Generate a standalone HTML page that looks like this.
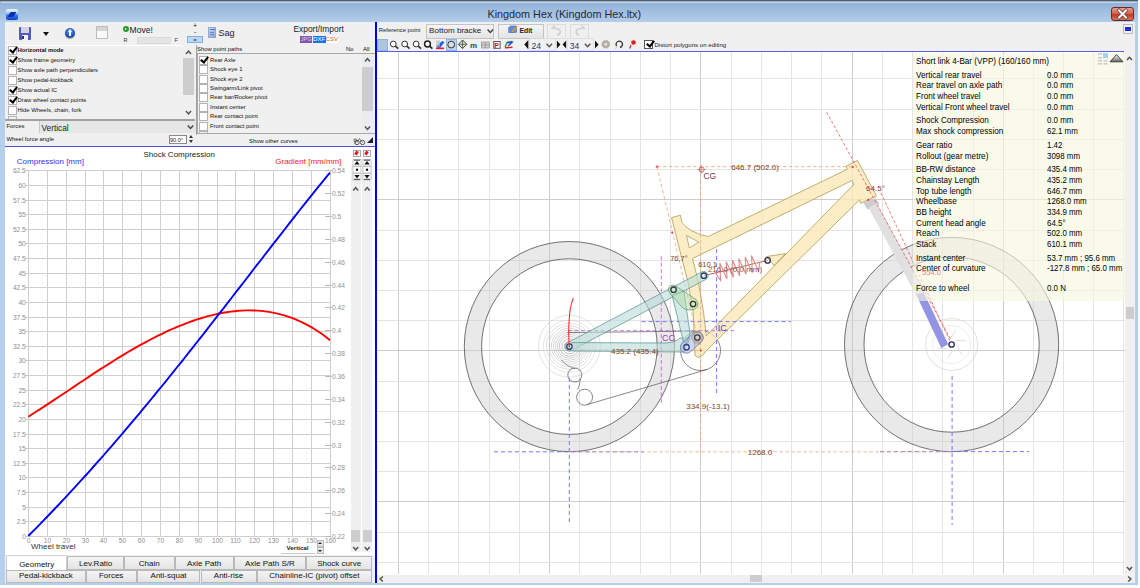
<!DOCTYPE html>
<html><head><meta charset="utf-8">
<style>
html,body{margin:0;padding:0;width:1140px;height:588px;overflow:hidden;background:#fbfcfd;font-family:"Liberation Sans",sans-serif;}
.a{position:absolute;}
#win{position:absolute;left:0;top:0;width:1138px;height:584.5px;background:#b6cfea;}
#title{position:absolute;left:0;top:0;width:1138px;height:22px;background:linear-gradient(#8fb0d4,#b3cdea);border-top:1px solid #5a5a5a;box-sizing:border-box;}
#client{position:absolute;left:5px;top:22px;width:1130px;height:561px;background:#f0f0f0;}
.cl{font-size:6.6px;fill:#909090;font-family:"Liberation Sans",sans-serif;}
.t6{font-size:5.9px;color:#111;white-space:pre;}
.cb{position:absolute;width:7px;height:7px;border:1px solid #b2b2b2;background:#fff;}
.ck::after{content:"";position:absolute;left:2px;top:-2.2px;width:2.8px;height:6.2px;border:solid #000;border-width:0 2.1px 2.1px 0;transform:rotate(38deg);}
.tab{position:absolute;box-sizing:border-box;border:1px solid #b9b9b9;background:linear-gradient(#f4f4f4,#e4e4e4);font-size:8px;color:#111;text-align:center;line-height:13px;}
.info{position:absolute;left:915.5px;font-size:8.8px;color:#000;white-space:pre;transform:scaleX(0.925);transform-origin:0 0;}
.val{position:absolute;left:1047px;font-size:8.8px;color:#000;white-space:pre;transform:scaleX(0.9);transform-origin:0 0;}
svg text{font-family:"Liberation Sans",sans-serif;}
</style></head><body>
<div id="win">
 <div id="title">
  <div class="a" style="left:6px;top:8px;width:12px;height:11px;border-radius:2px;background:linear-gradient(#f4faff 0%,#a8d0f8 35%,#2a7ae8 60%,#1040c0);"></div><div class="a" style="left:9px;top:11px;width:6px;height:5px;background:#0a30b0;transform:skewX(-30deg);border-radius:1px;"></div>
  <div class="a" style="left:1px;top:1px;width:1136px;height:1px;background:#c4d6ec;"></div>
  <div class="a" style="left:487.5px;top:6.5px;font-size:10.8px;color:#1e2a3a;white-space:pre;">Kingdom Hex (Kingdom Hex.ltx)</div>
  <div class="a" style="left:1111px;top:6px;width:23px;height:14px;box-sizing:border-box;border:1px solid #6b2a2a;border-radius:3px;background:linear-gradient(#e9a08c,#d9614a 45%,#c23c22 55%,#d8745c);"></div>
  <svg class="a" style="left:1111px;top:6px;" width="23" height="14"><path d="M8,3.5 L15,10.5 M15,3.5 L8,10.5" stroke="#5a3a3a" stroke-width="3.4" stroke-linecap="square"/><path d="M8,3.5 L15,10.5 M15,3.5 L8,10.5" stroke="#fff" stroke-width="2" stroke-linecap="square"/></svg>
 </div>
 <div id="client"></div>
</div>

<!-- LEFT PANE -->
<div class="a" style="left:5px;top:22px;width:370px;height:561px;background:#f0f0f0;"></div>
<!-- toolbar icons -->
<div class="a" style="left:18.5px;top:27px;width:12.5px;height:13px;background:#5656c4;border-radius:1px;"></div>
<div class="a" style="left:21px;top:27px;width:7.5px;height:5.5px;background:#d4d4dc;"></div>
<div class="a" style="left:21.5px;top:35px;width:6px;height:5px;background:#f4f4ff;"></div><div class="a" style="left:22px;top:36px;width:1.5px;height:2.5px;background:#2a2aa0;"></div>
<div class="a" style="left:43px;top:32px;width:0;height:0;border-left:3px solid transparent;border-right:3px solid transparent;border-top:4px solid #111;"></div>
<div class="a" style="left:65px;top:28px;width:10px;height:10px;border-radius:50%;background:radial-gradient(circle at 50% 35%,#6aa0ff,#1040b0 70%);box-shadow:0 1px 1px #999;"></div>
<div class="a" style="left:69.2px;top:32px;width:1.8px;height:4px;background:#fff;"></div><div class="a" style="left:67.6px;top:29.3px;width:0;height:0;border-left:2.5px solid transparent;border-right:2.5px solid transparent;border-bottom:3px solid #fff;"></div>
<div class="a" style="left:96px;top:26px;width:12px;height:13px;box-sizing:border-box;border:1px solid #bcbcbc;background:linear-gradient(#d4d4d4 40%,#fafafa 40%);"></div>
<div class="a" style="left:123px;top:26px;width:6px;height:6px;border-radius:50%;background:#2a9a2a;"></div><div class="a" style="left:125.2px;top:27.6px;width:0;height:0;border-top:1.4px solid transparent;border-bottom:1.4px solid transparent;border-left:2.2px solid #fff;"></div>
<div class="a" style="left:129.5px;top:24.5px;font-size:8.6px;color:#222;">Move!</div>
<div class="a" style="left:123.5px;top:37.3px;font-size:5.5px;color:#333;">R</div>
<div class="a" style="left:136.5px;top:37px;width:34px;height:6.5px;background:#e4e4e4;border:1px solid #dadada;box-sizing:border-box;"></div>
<div class="a" style="left:174.5px;top:37.3px;font-size:5.5px;color:#333;">F</div>
<div class="a" style="left:193px;top:22.3px;font-size:7px;color:#222;">+</div>
<div class="a" style="left:194px;top:28px;font-size:7px;color:#222;">-</div>
<div class="a" style="left:187px;top:36px;width:16px;height:7px;box-sizing:border-box;background:#bcd8f4;border:1px solid #7db0e8;font-size:6px;line-height:6px;text-align:center;color:#222;">=</div>
<div class="a" style="left:208px;top:27px;width:7.5px;height:10.5px;background:linear-gradient(135deg,#c8d8f8,#8aa4e0);border:0.5px solid #9aa8c8;box-sizing:border-box;"></div><div class="a" style="left:210px;top:29px;width:4.5px;height:1.2px;background:#3a7ae8;"></div><div class="a" style="left:210px;top:31.5px;width:3.5px;height:0.8px;background:#6a8ad0;"></div><div class="a" style="left:210px;top:33.5px;width:4px;height:0.8px;background:#6a8ad0;"></div>
<div class="a" style="left:218.5px;top:28px;font-size:9px;color:#222;">Sag</div>
<div class="a" style="left:293.5px;top:24px;font-size:8.4px;color:#222;white-space:pre;">Export/Import</div>
<div class="a" style="left:299.7px;top:35.8px;width:12.8px;height:6.8px;background:#8454b0;font-size:5.5px;color:#ddd;line-height:7px;text-align:center;">JPG</div>
<div class="a" style="left:312.5px;top:35.8px;width:13.1px;height:6.8px;background:#1a74e8;font-size:6px;color:#fff;line-height:7px;text-align:center;">DXF</div>
<div class="a" style="left:325.6px;top:35.8px;width:12px;height:6.8px;background:#fff;font-size:6px;color:#e05030;line-height:7px;text-align:center;">CSV</div>

<!-- checkbox list left -->
<div class="a" style="left:6px;top:45px;width:177px;height:75px;background:#f0f0f0;border-top:1px solid #fff;"></div>
<div class="a" style="left:183px;top:45px;width:12px;height:75px;background:#f0f0f0;"></div>
<div class="a" style="left:183px;top:58px;width:11px;height:37px;background:#cdcdcd;"></div>
<div class="a" style="left:5px;top:119px;width:190px;height:1.5px;background:#a0a0a0;"></div>
<div class="a" style="left:195.5px;top:45px;width:1px;height:90px;background:#a0a0a0;"></div>

<div class="cb ck" style="left:8px;top:46px;"></div><div class="a t6" style="left:17.5px;top:46.5px;font-weight:bold;">Horizontal mode</div>
<div class="cb ck" style="left:8px;top:56px;"></div><div class="a t6" style="left:17.5px;top:56.5px;">Show frame geometry</div>
<div class="cb" style="left:8px;top:66px;"></div><div class="a t6" style="left:17.5px;top:66.5px;">Show axle path perpendiculars</div>
<div class="cb" style="left:8px;top:76px;"></div><div class="a t6" style="left:17.5px;top:76.5px;">Show pedal-kickback</div>
<div class="cb ck" style="left:8px;top:86px;"></div><div class="a t6" style="left:17.5px;top:86.5px;">Show actual IC</div>
<div class="cb ck" style="left:8px;top:96px;"></div><div class="a t6" style="left:17.5px;top:96.5px;">Draw wheel contact points</div>
<div class="cb" style="left:8px;top:106px;"></div><div class="a t6" style="left:17.5px;top:106.5px;">Hide Wheels, chain, fork</div>
<div class="a" style="left:8px;top:116px;width:9px;height:3px;border:1px solid #b8b8b8;border-bottom:0;box-sizing:border-box;"></div>

<!-- forces row -->
<div class="a t6" style="left:6.5px;top:122.5px;">Forces</div>
<div class="a" style="left:39px;top:120.5px;width:156px;height:12px;background:#e6e6e6;border-left:1px solid #c8c8c8;"></div>
<div class="a" style="left:41.5px;top:122.5px;font-size:8.3px;color:#222;">Vertical</div>
<div class="a t6" style="left:6.5px;top:135.5px;">Wheel force angle</div>
<div class="a" style="left:169px;top:134.5px;width:18px;height:9px;background:#fff;border:1px solid #8a8a8a;box-sizing:border-box;font-size:5.5px;line-height:8px;color:#222;">90.0°</div>
<div class="a" style="left:189px;top:134.5px;width:0;height:0;border-left:2.5px solid transparent;border-right:2.5px solid transparent;border-bottom:3px solid #333;"></div>
<div class="a" style="left:189px;top:140px;width:0;height:0;border-left:2.5px solid transparent;border-right:2.5px solid transparent;border-top:3px solid #333;"></div>

<!-- point paths list -->
<div class="a t6" style="left:197px;top:45.5px;">Show point paths</div>
<div class="a t6" style="left:346px;top:45.5px;">No</div>
<div class="a t6" style="left:363px;top:45.5px;">All</div>
<div class="a" style="left:197px;top:53px;width:178px;height:81px;box-sizing:border-box;border:1px solid #a8a8a8;border-right:0;background:#f0f0f0;"></div>
<div class="a" style="left:362px;top:54px;width:12px;height:79px;background:#ececec;"></div>
<div class="a" style="left:362px;top:67px;width:11px;height:44px;background:#cdcdcd;"></div>
<div class="cb ck" style="left:199px;top:56px;"></div><div class="a t6" style="left:210px;top:57px;">Rear Axle</div>
<div class="cb" style="left:199px;top:65.4px;"></div><div class="a t6" style="left:210px;top:66.4px;">Shock eye 1</div>
<div class="cb" style="left:199px;top:74.7px;"></div><div class="a t6" style="left:210px;top:75.7px;">Shock eye 2</div>
<div class="cb" style="left:199px;top:84.1px;"></div><div class="a t6" style="left:210px;top:85.1px;">Swingarm/Link pivot</div>
<div class="cb" style="left:199px;top:93.4px;"></div><div class="a t6" style="left:210px;top:94.4px;">Rear bar/Rocker pivot</div>
<div class="cb" style="left:199px;top:102.8px;"></div><div class="a t6" style="left:210px;top:103.8px;">Instant center</div>
<div class="cb" style="left:199px;top:112.1px;"></div><div class="a t6" style="left:210px;top:113.1px;">Rear contact point</div>
<div class="cb" style="left:199px;top:121.5px;"></div><div class="a t6" style="left:210px;top:122.5px;">Front contact point</div>
<div class="a" style="left:199px;top:131px;width:9px;height:2px;border:1px solid #b8b8b8;border-bottom:0;box-sizing:border-box;"></div>
<div class="a t6" style="left:249px;top:137.5px;">Show other curves</div>
<div class="a" style="left:353px;top:137px;font-size:6px;color:#333;">&#x26b2;</div>
<div class="a" style="left:367px;top:137px;width:0;height:0;border-left:6px solid transparent;border-bottom:6px solid #222;"></div>

<!-- chart area -->
<div class="a" style="left:5px;top:146px;width:370px;height:1px;background:#5252d8;"></div>
<div class="a" style="left:5px;top:147px;width:370px;height:408px;background:#fff;"></div>
<div class="a" style="left:350.5px;top:164px;width:10px;height:388px;background:#f0f0f0;"></div>
<div class="a" style="left:362px;top:164px;width:10px;height:388px;background:#f0f0f0;"></div>
<div class="a" style="left:351px;top:530px;width:9px;height:12px;background:#cdcdcd;"></div>
<div class="a" style="left:362.6px;top:530px;width:9px;height:12px;background:#cdcdcd;"></div>
<svg class="a" style="left:0;top:0;" width="1140" height="588">
<text x="179.2" y="157" text-anchor="middle" style="font-size:8px;fill:#222;">Shock Compression</text>
<text x="16.8" y="163.8" style="font-size:8px;fill:#3030ff;">Compression [mm]</text>
<text x="341.5" y="163.8" text-anchor="end" style="font-size:8px;fill:#ff2020;">Gradient [mm/mm]</text>
<text x="31" y="549.2" style="font-size:8px;fill:#333;">Wheel travel</text>
<line x1="28.5" y1="170" x2="28.5" y2="537" stroke="#cfcfcf" stroke-width="1"/>
<line x1="47.5" y1="170" x2="47.5" y2="537" stroke="#cfcfcf" stroke-width="1"/>
<line x1="66.5" y1="170" x2="66.5" y2="537" stroke="#cfcfcf" stroke-width="1"/>
<line x1="85.5" y1="170" x2="85.5" y2="537" stroke="#cfcfcf" stroke-width="1"/>
<line x1="103.5" y1="170" x2="103.5" y2="537" stroke="#cfcfcf" stroke-width="1"/>
<line x1="122.5" y1="170" x2="122.5" y2="537" stroke="#cfcfcf" stroke-width="1"/>
<line x1="141.5" y1="170" x2="141.5" y2="537" stroke="#cfcfcf" stroke-width="1"/>
<line x1="160.5" y1="170" x2="160.5" y2="537" stroke="#cfcfcf" stroke-width="1"/>
<line x1="179.5" y1="170" x2="179.5" y2="537" stroke="#cfcfcf" stroke-width="1"/>
<line x1="198.5" y1="170" x2="198.5" y2="537" stroke="#cfcfcf" stroke-width="1"/>
<line x1="217.5" y1="170" x2="217.5" y2="537" stroke="#cfcfcf" stroke-width="1"/>
<line x1="235.5" y1="170" x2="235.5" y2="537" stroke="#cfcfcf" stroke-width="1"/>
<line x1="254.5" y1="170" x2="254.5" y2="537" stroke="#cfcfcf" stroke-width="1"/>
<line x1="273.5" y1="170" x2="273.5" y2="537" stroke="#cfcfcf" stroke-width="1"/>
<line x1="292.5" y1="170" x2="292.5" y2="537" stroke="#cfcfcf" stroke-width="1"/>
<line x1="311.5" y1="170" x2="311.5" y2="537" stroke="#cfcfcf" stroke-width="1"/>
<line x1="330.5" y1="170" x2="330.5" y2="537" stroke="#cfcfcf" stroke-width="1"/>
<line x1="28" y1="536.5" x2="331" y2="536.5" stroke="#cfcfcf" stroke-width="1"/>
<line x1="28" y1="521.5" x2="331" y2="521.5" stroke="#cfcfcf" stroke-width="1"/>
<line x1="28" y1="507.5" x2="331" y2="507.5" stroke="#cfcfcf" stroke-width="1"/>
<line x1="28" y1="492.5" x2="331" y2="492.5" stroke="#cfcfcf" stroke-width="1"/>
<line x1="28" y1="477.5" x2="331" y2="477.5" stroke="#cfcfcf" stroke-width="1"/>
<line x1="28" y1="463.5" x2="331" y2="463.5" stroke="#cfcfcf" stroke-width="1"/>
<line x1="28" y1="448.5" x2="331" y2="448.5" stroke="#cfcfcf" stroke-width="1"/>
<line x1="28" y1="434.5" x2="331" y2="434.5" stroke="#cfcfcf" stroke-width="1"/>
<line x1="28" y1="419.5" x2="331" y2="419.5" stroke="#cfcfcf" stroke-width="1"/>
<line x1="28" y1="404.5" x2="331" y2="404.5" stroke="#cfcfcf" stroke-width="1"/>
<line x1="28" y1="390.5" x2="331" y2="390.5" stroke="#cfcfcf" stroke-width="1"/>
<line x1="28" y1="375.5" x2="331" y2="375.5" stroke="#cfcfcf" stroke-width="1"/>
<line x1="28" y1="360.5" x2="331" y2="360.5" stroke="#cfcfcf" stroke-width="1"/>
<line x1="28" y1="346.5" x2="331" y2="346.5" stroke="#cfcfcf" stroke-width="1"/>
<line x1="28" y1="331.5" x2="331" y2="331.5" stroke="#cfcfcf" stroke-width="1"/>
<line x1="28" y1="317.5" x2="331" y2="317.5" stroke="#cfcfcf" stroke-width="1"/>
<line x1="28" y1="302.5" x2="331" y2="302.5" stroke="#cfcfcf" stroke-width="1"/>
<line x1="28" y1="287.5" x2="331" y2="287.5" stroke="#cfcfcf" stroke-width="1"/>
<line x1="28" y1="273.5" x2="331" y2="273.5" stroke="#cfcfcf" stroke-width="1"/>
<line x1="28" y1="258.5" x2="331" y2="258.5" stroke="#cfcfcf" stroke-width="1"/>
<line x1="28" y1="243.5" x2="331" y2="243.5" stroke="#cfcfcf" stroke-width="1"/>
<line x1="28" y1="229.5" x2="331" y2="229.5" stroke="#cfcfcf" stroke-width="1"/>
<line x1="28" y1="214.5" x2="331" y2="214.5" stroke="#cfcfcf" stroke-width="1"/>
<line x1="28" y1="200.5" x2="331" y2="200.5" stroke="#cfcfcf" stroke-width="1"/>
<line x1="28" y1="185.5" x2="331" y2="185.5" stroke="#cfcfcf" stroke-width="1"/>
<line x1="28" y1="170.5" x2="331" y2="170.5" stroke="#cfcfcf" stroke-width="1"/>
<line x1="25.5" y1="536.5" x2="28" y2="536.5" stroke="#c8c8c8" stroke-width="1"/>
<text x="25.8" y="538.80" text-anchor="end" class="cl">0</text>
<line x1="25.5" y1="521.5" x2="28" y2="521.5" stroke="#c8c8c8" stroke-width="1"/>
<text x="25.8" y="523.80" text-anchor="end" class="cl">2.5</text>
<line x1="25.5" y1="507.5" x2="28" y2="507.5" stroke="#c8c8c8" stroke-width="1"/>
<text x="25.8" y="509.80" text-anchor="end" class="cl">5</text>
<line x1="25.5" y1="492.5" x2="28" y2="492.5" stroke="#c8c8c8" stroke-width="1"/>
<text x="25.8" y="494.80" text-anchor="end" class="cl">7.5</text>
<line x1="25.5" y1="477.5" x2="28" y2="477.5" stroke="#c8c8c8" stroke-width="1"/>
<text x="25.8" y="479.80" text-anchor="end" class="cl">10</text>
<line x1="25.5" y1="463.5" x2="28" y2="463.5" stroke="#c8c8c8" stroke-width="1"/>
<text x="25.8" y="465.80" text-anchor="end" class="cl">12.5</text>
<line x1="25.5" y1="448.5" x2="28" y2="448.5" stroke="#c8c8c8" stroke-width="1"/>
<text x="25.8" y="450.80" text-anchor="end" class="cl">15</text>
<line x1="25.5" y1="434.5" x2="28" y2="434.5" stroke="#c8c8c8" stroke-width="1"/>
<text x="25.8" y="436.80" text-anchor="end" class="cl">17.5</text>
<line x1="25.5" y1="419.5" x2="28" y2="419.5" stroke="#c8c8c8" stroke-width="1"/>
<text x="25.8" y="421.80" text-anchor="end" class="cl">20</text>
<line x1="25.5" y1="404.5" x2="28" y2="404.5" stroke="#c8c8c8" stroke-width="1"/>
<text x="25.8" y="406.80" text-anchor="end" class="cl">22.5</text>
<line x1="25.5" y1="390.5" x2="28" y2="390.5" stroke="#c8c8c8" stroke-width="1"/>
<text x="25.8" y="392.80" text-anchor="end" class="cl">25</text>
<line x1="25.5" y1="375.5" x2="28" y2="375.5" stroke="#c8c8c8" stroke-width="1"/>
<text x="25.8" y="377.80" text-anchor="end" class="cl">27.5</text>
<line x1="25.5" y1="360.5" x2="28" y2="360.5" stroke="#c8c8c8" stroke-width="1"/>
<text x="25.8" y="362.80" text-anchor="end" class="cl">30</text>
<line x1="25.5" y1="346.5" x2="28" y2="346.5" stroke="#c8c8c8" stroke-width="1"/>
<text x="25.8" y="348.80" text-anchor="end" class="cl">32.5</text>
<line x1="25.5" y1="331.5" x2="28" y2="331.5" stroke="#c8c8c8" stroke-width="1"/>
<text x="25.8" y="333.80" text-anchor="end" class="cl">35</text>
<line x1="25.5" y1="317.5" x2="28" y2="317.5" stroke="#c8c8c8" stroke-width="1"/>
<text x="25.8" y="319.80" text-anchor="end" class="cl">37.5</text>
<line x1="25.5" y1="302.5" x2="28" y2="302.5" stroke="#c8c8c8" stroke-width="1"/>
<text x="25.8" y="304.80" text-anchor="end" class="cl">40</text>
<line x1="25.5" y1="287.5" x2="28" y2="287.5" stroke="#c8c8c8" stroke-width="1"/>
<text x="25.8" y="289.80" text-anchor="end" class="cl">42.5</text>
<line x1="25.5" y1="273.5" x2="28" y2="273.5" stroke="#c8c8c8" stroke-width="1"/>
<text x="25.8" y="275.80" text-anchor="end" class="cl">45</text>
<line x1="25.5" y1="258.5" x2="28" y2="258.5" stroke="#c8c8c8" stroke-width="1"/>
<text x="25.8" y="260.80" text-anchor="end" class="cl">47.5</text>
<line x1="25.5" y1="243.5" x2="28" y2="243.5" stroke="#c8c8c8" stroke-width="1"/>
<text x="25.8" y="245.80" text-anchor="end" class="cl">50</text>
<line x1="25.5" y1="229.5" x2="28" y2="229.5" stroke="#c8c8c8" stroke-width="1"/>
<text x="25.8" y="231.80" text-anchor="end" class="cl">52.5</text>
<line x1="25.5" y1="214.5" x2="28" y2="214.5" stroke="#c8c8c8" stroke-width="1"/>
<text x="25.8" y="216.80" text-anchor="end" class="cl">55</text>
<line x1="25.5" y1="200.5" x2="28" y2="200.5" stroke="#c8c8c8" stroke-width="1"/>
<text x="25.8" y="202.80" text-anchor="end" class="cl">57.5</text>
<line x1="25.5" y1="185.5" x2="28" y2="185.5" stroke="#c8c8c8" stroke-width="1"/>
<text x="25.8" y="187.80" text-anchor="end" class="cl">60</text>
<line x1="25.5" y1="170.5" x2="28" y2="170.5" stroke="#c8c8c8" stroke-width="1"/>
<text x="25.8" y="172.80" text-anchor="end" class="cl">62.5</text>
<text x="28.50" y="542.6" text-anchor="middle" class="cl">0</text>
<text x="47.50" y="542.6" text-anchor="middle" class="cl">10</text>
<text x="66.50" y="542.6" text-anchor="middle" class="cl">20</text>
<text x="85.50" y="542.6" text-anchor="middle" class="cl">30</text>
<text x="103.50" y="542.6" text-anchor="middle" class="cl">40</text>
<text x="122.50" y="542.6" text-anchor="middle" class="cl">50</text>
<text x="141.50" y="542.6" text-anchor="middle" class="cl">60</text>
<text x="160.50" y="542.6" text-anchor="middle" class="cl">70</text>
<text x="179.50" y="542.6" text-anchor="middle" class="cl">80</text>
<text x="198.50" y="542.6" text-anchor="middle" class="cl">90</text>
<text x="217.50" y="542.6" text-anchor="middle" class="cl">100</text>
<text x="235.50" y="542.6" text-anchor="middle" class="cl">110</text>
<text x="254.50" y="542.6" text-anchor="middle" class="cl">120</text>
<text x="273.50" y="542.6" text-anchor="middle" class="cl">130</text>
<text x="292.50" y="542.6" text-anchor="middle" class="cl">140</text>
<text x="311.50" y="542.6" text-anchor="middle" class="cl">150</text>
<text x="330.50" y="542.6" text-anchor="middle" class="cl">160</text>
<line x1="325" y1="536.50" x2="331.5" y2="536.50" stroke="#b8b8b8" stroke-width="1"/>
<text x="332" y="538.50" class="cl">0.22</text>
<line x1="325" y1="513.50" x2="331.5" y2="513.50" stroke="#b8b8b8" stroke-width="1"/>
<text x="332" y="515.50" class="cl">0.24</text>
<line x1="325" y1="490.50" x2="331.5" y2="490.50" stroke="#b8b8b8" stroke-width="1"/>
<text x="332" y="492.50" class="cl">0.26</text>
<line x1="325" y1="467.50" x2="331.5" y2="467.50" stroke="#b8b8b8" stroke-width="1"/>
<text x="332" y="469.50" class="cl">0.28</text>
<line x1="325" y1="445.50" x2="331.5" y2="445.50" stroke="#b8b8b8" stroke-width="1"/>
<text x="332" y="447.50" class="cl">0.3</text>
<line x1="325" y1="422.50" x2="331.5" y2="422.50" stroke="#b8b8b8" stroke-width="1"/>
<text x="332" y="424.50" class="cl">0.32</text>
<line x1="325" y1="399.50" x2="331.5" y2="399.50" stroke="#b8b8b8" stroke-width="1"/>
<text x="332" y="401.50" class="cl">0.34</text>
<line x1="325" y1="376.50" x2="331.5" y2="376.50" stroke="#b8b8b8" stroke-width="1"/>
<text x="332" y="378.50" class="cl">0.36</text>
<line x1="325" y1="353.50" x2="331.5" y2="353.50" stroke="#b8b8b8" stroke-width="1"/>
<text x="332" y="355.50" class="cl">0.38</text>
<line x1="325" y1="330.50" x2="331.5" y2="330.50" stroke="#b8b8b8" stroke-width="1"/>
<text x="332" y="332.50" class="cl">0.4</text>
<line x1="325" y1="307.50" x2="331.5" y2="307.50" stroke="#b8b8b8" stroke-width="1"/>
<text x="332" y="309.50" class="cl">0.42</text>
<line x1="325" y1="285.50" x2="331.5" y2="285.50" stroke="#b8b8b8" stroke-width="1"/>
<text x="332" y="287.50" class="cl">0.44</text>
<line x1="325" y1="262.50" x2="331.5" y2="262.50" stroke="#b8b8b8" stroke-width="1"/>
<text x="332" y="264.50" class="cl">0.46</text>
<line x1="325" y1="239.50" x2="331.5" y2="239.50" stroke="#b8b8b8" stroke-width="1"/>
<text x="332" y="241.50" class="cl">0.48</text>
<line x1="325" y1="216.50" x2="331.5" y2="216.50" stroke="#b8b8b8" stroke-width="1"/>
<text x="332" y="218.50" class="cl">0.5</text>
<line x1="325" y1="193.50" x2="331.5" y2="193.50" stroke="#b8b8b8" stroke-width="1"/>
<text x="332" y="195.50" class="cl">0.52</text>
<line x1="325" y1="170.50" x2="331.5" y2="170.50" stroke="#b8b8b8" stroke-width="1"/>
<text x="332" y="172.50" class="cl">0.54</text>
<polyline fill="none" stroke="#ff0000" stroke-width="1.9" points="28.3,416.7 32.1,414.3 35.9,411.8 39.8,409.4 43.6,406.9 47.4,404.4 51.2,401.9 55.0,399.4 58.9,396.8 62.7,394.3 66.5,391.7 70.3,389.2 74.1,386.6 77.9,384.0 81.8,381.5 85.6,379.0 89.4,376.4 93.2,373.9 97.0,371.4 100.9,368.9 104.7,366.5 108.5,364.1 112.3,361.7 116.1,359.3 120.0,356.9 123.8,354.6 127.6,352.3 131.4,350.1 135.2,347.9 139.1,345.7 142.9,343.6 146.7,341.6 150.5,339.5 154.3,337.6 158.1,335.6 162.0,333.8 165.8,331.9 169.6,330.2 173.4,328.5 177.2,326.9 181.1,325.3 184.9,323.8 188.7,322.3 192.5,321.0 196.3,319.7 200.2,318.5 204.0,317.3 207.8,316.2 211.6,315.3 215.4,314.4 219.2,313.5 223.1,312.8 226.9,312.2 230.7,311.6 234.5,311.2 238.3,310.8 242.2,310.6 246.0,310.4 249.8,310.4 253.6,310.5 257.4,310.6 261.3,310.9 265.1,311.4 268.9,311.9 272.7,312.6 276.5,313.4 280.4,314.3 284.2,315.3 288.0,316.6 291.8,317.9 295.6,319.4 299.4,321.0 303.3,322.8 307.1,324.8 310.9,326.9 314.7,329.2 318.5,331.7 322.4,334.3 326.2,337.2 330.0,340.2"/>
<polyline fill="none" stroke="#0000ff" stroke-width="1.9" points="28.3,536.0 32.1,532.1 35.9,528.3 39.8,524.4 43.6,520.4 47.4,516.5 51.2,512.5 55.0,508.5 58.9,504.5 62.7,500.4 66.5,496.3 70.3,492.2 74.1,488.1 77.9,483.9 81.8,479.7 85.6,475.5 89.4,471.3 93.2,467.0 97.0,462.7 100.9,458.4 104.7,454.0 108.5,449.7 112.3,445.3 116.1,440.8 120.0,436.4 123.8,431.9 127.6,427.4 131.4,422.9 135.2,418.4 139.1,413.8 142.9,409.2 146.7,404.6 150.5,400.0 154.3,395.3 158.1,390.7 162.0,386.0 165.8,381.3 169.6,376.5 173.4,371.8 177.2,367.0 181.1,362.3 184.9,357.5 188.7,352.6 192.5,347.8 196.3,343.0 200.2,338.1 204.0,333.3 207.8,328.4 211.6,323.5 215.4,318.6 219.2,313.7 223.1,308.8 226.9,303.9 230.7,299.0 234.5,294.0 238.3,289.1 242.2,284.2 246.0,279.2 249.8,274.3 253.6,269.3 257.4,264.4 261.3,259.5 265.1,254.5 268.9,249.6 272.7,244.7 276.5,239.8 280.4,234.9 284.2,230.0 288.0,225.1 291.8,220.2 295.6,215.4 299.4,210.5 303.3,205.7 307.1,200.9 310.9,196.1 314.7,191.4 318.5,186.6 322.4,181.9 326.2,177.2 330.0,172.6"/>
</svg>
<!-- small buttons top right of chart -->
<div class="a" style="left:353px;top:150px;width:8px;height:7px;background:#fff;border:1px solid #aaa;box-sizing:border-box;"></div>
<div class="a" style="left:363px;top:150px;width:8px;height:7px;background:#fff;border:1px solid #aaa;box-sizing:border-box;"></div>
<div class="a" style="left:355px;top:151px;width:3px;height:4px;background:#e02020;transform:rotate(30deg);"></div>
<div class="a" style="left:365px;top:151px;width:3px;height:4px;background:#e02020;transform:rotate(30deg);"></div>
<!-- vertical combobox bottom -->
<div class="a" style="left:281px;top:544px;width:34px;height:8.5px;background:#fff;border-bottom:1px solid #c8c8c8;"></div>
<div class="a" style="left:286.5px;top:543.5px;font-size:6.2px;font-weight:bold;color:#222;">Vertical</div>
<div class="a" style="left:316.5px;top:540px;width:7px;height:6.5px;background:#e6e6e6;border:1px solid #bbb;box-sizing:border-box;"></div><div class="a" style="left:316.5px;top:547px;width:7px;height:6.5px;background:#e6e6e6;border:1px solid #bbb;box-sizing:border-box;"></div><div class="a" style="left:318px;top:542px;border-left:2px solid transparent;border-right:2px solid transparent;border-bottom:2.5px solid #222;"></div><div class="a" style="left:318px;top:549.5px;border-left:2px solid transparent;border-right:2px solid transparent;border-top:2.5px solid #222;"></div>

<!-- tabs -->
<div class="tab" style="left:67.4px;top:555.5px;width:56.6px;height:14px;">Lev.Ratio</div>
<div class="tab" style="left:124px;top:555.5px;width:50.5px;height:14px;">Chain</div>
<div class="tab" style="left:174.5px;top:555.5px;width:59.2px;height:14px;">Axle Path</div>
<div class="tab" style="left:233.7px;top:555.5px;width:72.3px;height:14px;">Axle Path S/R</div>
<div class="tab" style="left:306px;top:555.5px;width:66.3px;height:14px;">Shock curve</div>
<div class="tab" style="left:6px;top:554.5px;width:61.4px;height:15.5px;background:#fff;border-bottom:0;border-color:#d0d0d0;line-height:17px;">Geometry</div>
<div class="tab" style="left:6px;top:569.5px;width:79.6px;height:13px;line-height:9.5px;">Pedal-kickback</div>
<div class="tab" style="left:85.6px;top:569.5px;width:51.1px;height:13px;line-height:9.5px;">Forces</div>
<div class="tab" style="left:136.7px;top:569.5px;width:63.8px;height:13px;line-height:9.5px;">Anti-squat</div>
<div class="tab" style="left:200.5px;top:569.5px;width:56px;height:13px;line-height:9.5px;">Anti-rise</div>
<div class="tab" style="left:256.5px;top:569.5px;width:115.8px;height:13px;line-height:9.5px;">Chainline-IC (pivot) offset</div>

<!-- divider -->
<div class="a" style="left:375px;top:22px;width:2px;height:561px;background:#0000f0;"></div>

<!-- RIGHT PANE toolbar -->
<div class="a" style="left:377px;top:22px;width:758px;height:30px;background:#f0f0f0;"></div>
<div class="a" style="left:378.8px;top:26.5px;font-size:5.9px;color:#222;white-space:pre;">Reference point</div>
<div class="a" style="left:426px;top:23.5px;width:68px;height:15px;box-sizing:border-box;border:1px solid #c4c4c4;background:linear-gradient(#f4f4f4,#e4e4e4);"></div>
<div class="a" style="left:429px;top:26px;font-size:8.1px;color:#222;white-space:pre;">Bottom bracke</div>
<div class="a" style="left:498px;top:23.5px;width:46px;height:15px;box-sizing:border-box;border:1px solid #c4c4c4;background:linear-gradient(#f4f4f4,#e4e4e4);"></div>
<div class="a" style="left:508px;top:27px;width:6px;height:6px;background:#7aa0e0;"></div>
<div class="a" style="left:519.5px;top:26.5px;font-size:6.8px;font-weight:bold;color:#222;">Edit</div>
<div class="a" style="left:547px;top:23.5px;width:19px;height:15px;box-sizing:border-box;border:1px solid #dcdcdc;"></div>
<div class="a" style="left:570px;top:23.5px;width:19px;height:15px;box-sizing:border-box;border:1px solid #dcdcdc;"></div>
<!-- toolbar icons row 2 -->
<div class="a" style="left:377.3px;top:38.6px;width:10.5px;height:12px;background:#b8d4f4;border:1px solid #8cb4e4;box-sizing:border-box;"></div>
<div class="a" style="left:445.7px;top:38.6px;width:11px;height:12px;background:#b8d4f4;border:1px solid #8cb4e4;box-sizing:border-box;"></div>
<div class="a" style="left:643.7px;top:40px;width:9.2px;height:9.2px;border:1px solid #555;background:#fff;box-sizing:border-box;"></div>
<div class="a ck" style="left:645.5px;top:41px;width:6px;height:6px;"></div>
<div class="a" style="left:654.4px;top:41px;font-size:6.1px;color:#222;white-space:pre;">Distort polygons on editing</div>
<div class="a" style="left:1123px;top:24px;width:10px;height:10px;box-sizing:border-box;border:1px solid #bbb;background:#eee;"></div>
<div class="a" style="left:1125px;top:27px;width:6px;height:4px;background:#2030d0;"></div>

<!-- canvas -->
<div class="a" style="left:377px;top:51px;width:747px;height:1px;background:#5c5cf0;"></div>
<div class="a" style="left:377px;top:52px;width:748px;height:522.5px;background:#fff;overflow:hidden;"></div>
<svg class="a" style="left:0;top:0;" width="1140" height="588">
<defs><clipPath id="cv"><rect x="377" y="52" width="748" height="522.5"/></clipPath></defs>
<g clip-path="url(#cv)">
<line x1="398.5" y1="52" x2="398.5" y2="574" stroke="#cdcdcd" stroke-width="1"/>
<line x1="428.5" y1="52" x2="428.5" y2="574" stroke="#e4e4e4" stroke-width="1"/>
<line x1="458.5" y1="52" x2="458.5" y2="574" stroke="#e4e4e4" stroke-width="1"/>
<line x1="489.5" y1="52" x2="489.5" y2="574" stroke="#e4e4e4" stroke-width="1"/>
<line x1="519.5" y1="52" x2="519.5" y2="574" stroke="#e4e4e4" stroke-width="1"/>
<line x1="549.5" y1="52" x2="549.5" y2="574" stroke="#cdcdcd" stroke-width="1"/>
<line x1="579.5" y1="52" x2="579.5" y2="574" stroke="#e4e4e4" stroke-width="1"/>
<line x1="610.5" y1="52" x2="610.5" y2="574" stroke="#e4e4e4" stroke-width="1"/>
<line x1="640.5" y1="52" x2="640.5" y2="574" stroke="#e4e4e4" stroke-width="1"/>
<line x1="670.5" y1="52" x2="670.5" y2="574" stroke="#e4e4e4" stroke-width="1"/>
<line x1="700.5" y1="52" x2="700.5" y2="574" stroke="#cdcdcd" stroke-width="1"/>
<line x1="731.5" y1="52" x2="731.5" y2="574" stroke="#e4e4e4" stroke-width="1"/>
<line x1="761.5" y1="52" x2="761.5" y2="574" stroke="#e4e4e4" stroke-width="1"/>
<line x1="791.5" y1="52" x2="791.5" y2="574" stroke="#e4e4e4" stroke-width="1"/>
<line x1="821.5" y1="52" x2="821.5" y2="574" stroke="#e4e4e4" stroke-width="1"/>
<line x1="852.5" y1="52" x2="852.5" y2="574" stroke="#cdcdcd" stroke-width="1"/>
<line x1="882.5" y1="52" x2="882.5" y2="574" stroke="#e4e4e4" stroke-width="1"/>
<line x1="912.5" y1="52" x2="912.5" y2="574" stroke="#e4e4e4" stroke-width="1"/>
<line x1="942.5" y1="52" x2="942.5" y2="574" stroke="#e4e4e4" stroke-width="1"/>
<line x1="973.5" y1="52" x2="973.5" y2="574" stroke="#e4e4e4" stroke-width="1"/>
<line x1="1003.5" y1="52" x2="1003.5" y2="574" stroke="#cdcdcd" stroke-width="1"/>
<line x1="1033.5" y1="52" x2="1033.5" y2="574" stroke="#e4e4e4" stroke-width="1"/>
<line x1="1063.5" y1="52" x2="1063.5" y2="574" stroke="#e4e4e4" stroke-width="1"/>
<line x1="1093.5" y1="52" x2="1093.5" y2="574" stroke="#e4e4e4" stroke-width="1"/>
<line x1="1123.5" y1="52" x2="1123.5" y2="574" stroke="#e4e4e4" stroke-width="1"/>
<line x1="377" y1="78.5" x2="1125" y2="78.5" stroke="#e4e4e4" stroke-width="1"/>
<line x1="377" y1="109.5" x2="1125" y2="109.5" stroke="#e4e4e4" stroke-width="1"/>
<line x1="377" y1="139.5" x2="1125" y2="139.5" stroke="#e4e4e4" stroke-width="1"/>
<line x1="377" y1="169.5" x2="1125" y2="169.5" stroke="#e4e4e4" stroke-width="1"/>
<line x1="377" y1="199.5" x2="1125" y2="199.5" stroke="#cdcdcd" stroke-width="1"/>
<line x1="377" y1="230.5" x2="1125" y2="230.5" stroke="#e4e4e4" stroke-width="1"/>
<line x1="377" y1="260.5" x2="1125" y2="260.5" stroke="#e4e4e4" stroke-width="1"/>
<line x1="377" y1="290.5" x2="1125" y2="290.5" stroke="#e4e4e4" stroke-width="1"/>
<line x1="377" y1="320.5" x2="1125" y2="320.5" stroke="#e4e4e4" stroke-width="1"/>
<line x1="377" y1="350.5" x2="1125" y2="350.5" stroke="#cdcdcd" stroke-width="1"/>
<line x1="377" y1="381.5" x2="1125" y2="381.5" stroke="#e4e4e4" stroke-width="1"/>
<line x1="377" y1="411.5" x2="1125" y2="411.5" stroke="#e4e4e4" stroke-width="1"/>
<line x1="377" y1="441.5" x2="1125" y2="441.5" stroke="#e4e4e4" stroke-width="1"/>
<line x1="377" y1="471.5" x2="1125" y2="471.5" stroke="#e4e4e4" stroke-width="1"/>
<line x1="377" y1="501.5" x2="1125" y2="501.5" stroke="#cdcdcd" stroke-width="1"/>
<line x1="377" y1="532.5" x2="1125" y2="532.5" stroke="#e4e4e4" stroke-width="1"/>
<line x1="377" y1="562.5" x2="1125" y2="562.5" stroke="#e4e4e4" stroke-width="1"/>
<path fill-rule="evenodd" fill="rgba(200,200,200,0.4)" stroke="#505050" stroke-width="0.8" d="M464.29999999999995,346.6 a105.1,105.1 0 1 0 210.2,0 a105.1,105.1 0 1 0 -210.2,0 Z M481.59999999999997,346.6 a87.8,87.8 0 1 0 175.6,0 a87.8,87.8 0 1 0 -175.6,0 Z"/>
<path fill-rule="evenodd" fill="rgba(200,200,200,0.4)" stroke="#505050" stroke-width="0.8" d="M844.5,344.5 a107.1,107.1 0 1 0 214.2,0 a107.1,107.1 0 1 0 -214.2,0 Z M864.0,344.5 a87.6,87.6 0 1 0 175.2,0 a87.6,87.6 0 1 0 -175.2,0 Z"/>
<circle cx="569.4" cy="346.20000000000005" r="5" fill="none" stroke="#8a8a8a" stroke-width="0.6"/>
<circle cx="569.4" cy="346.20000000000005" r="7.5" fill="none" stroke="#9a9a9a" stroke-width="0.6"/>
<circle cx="569.4" cy="346.20000000000005" r="10" fill="none" stroke="#a0a0a0" stroke-width="0.6"/>
<circle cx="569.4" cy="346.20000000000005" r="12" fill="none" stroke="#b0b0b0" stroke-width="0.6"/>
<circle cx="569.4" cy="346.20000000000005" r="14" fill="none" stroke="#b8b8b8" stroke-width="0.6"/>
<circle cx="569.4" cy="346.20000000000005" r="16" fill="none" stroke="#c0c0c0" stroke-width="0.6"/>
<circle cx="569.4" cy="346.20000000000005" r="18" fill="none" stroke="#c4c4c4" stroke-width="0.6"/>
<circle cx="569.4" cy="346.20000000000005" r="20.5" fill="none" stroke="#c8c8c8" stroke-width="0.6"/>
<circle cx="569.4" cy="346.20000000000005" r="23" fill="none" stroke="#cccccc" stroke-width="0.6"/>
<circle cx="569.4" cy="346.20000000000005" r="26" fill="none" stroke="#d4d4d4" stroke-width="0.6"/>
<circle cx="569.4" cy="346.20000000000005" r="31" fill="none" stroke="#d0cdc4" stroke-width="0.6"/>
<circle cx="951.6" cy="344.5" r="26" fill="none" stroke="#dcd8cc" stroke-width="0.8"/>
<circle cx="951.6" cy="344.5" r="19" fill="none" stroke="#e4e0d4" stroke-width="0.6"/>
<line x1="957.3" y1="346.3" x2="962.1" y2="355.3" stroke="#dcd8cc" stroke-width="0.8"/>
<line x1="952.9" y1="350.4" x2="947.5" y2="358.9" stroke="#dcd8cc" stroke-width="0.8"/>
<line x1="947.2" y1="348.6" x2="937.1" y2="348.2" stroke="#dcd8cc" stroke-width="0.8"/>
<line x1="945.9" y1="342.7" x2="941.1" y2="333.7" stroke="#dcd8cc" stroke-width="0.8"/>
<line x1="950.3" y1="338.6" x2="955.7" y2="330.1" stroke="#dcd8cc" stroke-width="0.8"/>
<line x1="956.0" y1="340.4" x2="966.1" y2="340.8" stroke="#dcd8cc" stroke-width="0.8"/>
<circle cx="700.5" cy="350.5" r="20" fill="none" stroke="#555" stroke-width="0.7"/>
<line x1="567.4" y1="332.6" x2="700.5" y2="331" stroke="#555" stroke-width="0.7"/>
<line x1="587" y1="404.6" x2="707" y2="369.5" stroke="#555" stroke-width="0.7"/>
<circle cx="574.8" cy="375" r="7" fill="none" stroke="#555" stroke-width="0.7"/>
<circle cx="584.6" cy="397.2" r="8" fill="none" stroke="#555" stroke-width="0.7"/>
<path fill="none" stroke="#555" stroke-width="0.6" d="M561,360 Q566,366 575,368.8"/>
<path fill="none" stroke="#555" stroke-width="0.6" d="M580.5,378.6 Q580,384 577.7,389.8"/>
<polygon points="863.3,202.4 875.5,198 879.6,204.1 867.3,209.6" fill="#cdcdcd"/>
<polygon points="868.6,207.8 916.3,295.5 924.7,290.9 877.0,203.2" fill="#e0e0e0"/>
<polygon points="916.1,294.5 923.7,292.2 948.2,344.3 941.3,348.1" fill="#9494e4"/>
<path fill-rule="evenodd" d="M671.6,217.7 L680.4,215.2 L682,222.4 L686,226.8 L691.3,230.6 L700.8,234.7 L708.3,236.5 L847.2,169.3 L846.1,166.3 L857.4,160.4 L876.5,195.8 L860.8,203.3 L859.5,199.9 L706.3,350.7 L702.5,355.5 L698,357.5 L695,355.5 L694.3,340 L693.2,312 L688,282 L681.8,258.5 Z M692.5,258.5 L852,180.5 L854,184.2 L706.3,335.8 L703.5,312 L698.5,282 Z M686.5,235.4 L698.8,242.2 L689.3,247.9 Z" fill="rgba(250,234,185,0.8)" stroke="#b09a50" stroke-width="0.8"/>
<polygon points="766.3,256.6 785.5,253.6 774,265.5" fill="rgba(250,234,185,0.8)" stroke="#b09a50" stroke-width="0.8"/>
<line x1="568" y1="330.7" x2="737" y2="330.7" stroke="#b860c8" stroke-width="0.8" stroke-dasharray="4,2.5"/>
<line x1="661.3" y1="256" x2="661.3" y2="405" stroke="#b860c8" stroke-width="0.8" stroke-dasharray="4,2.5"/>
<line x1="641.6" y1="321.6" x2="791" y2="321.6" stroke="#6a6aff" stroke-width="0.9" stroke-dasharray="4,3"/>
<line x1="716.6" y1="249" x2="716.6" y2="395" stroke="#6a6aff" stroke-width="0.9" stroke-dasharray="4,3"/>
<line x1="569.3" y1="378" x2="569.3" y2="525" stroke="#6a6aff" stroke-width="0.9" stroke-dasharray="4,3"/>
<line x1="494" y1="451.8" x2="644" y2="451.8" stroke="#6a6aff" stroke-width="0.9" stroke-dasharray="4,3"/>
<line x1="952.1" y1="376" x2="952.1" y2="525" stroke="#6a6aff" stroke-width="0.9" stroke-dasharray="4,3"/>
<line x1="880" y1="451.6" x2="1029" y2="451.6" stroke="#6a6aff" stroke-width="0.9" stroke-dasharray="4,3"/>
<line x1="657" y1="166.6" x2="852.7" y2="166.6" stroke="#f2a47a" stroke-width="0.8" stroke-dasharray="3.5,2.5"/>
<line x1="657" y1="166.6" x2="700.5" y2="350.5" stroke="#f2a47a" stroke-width="0.8" stroke-dasharray="3.5,2.5"/>
<line x1="700.6" y1="168" x2="700.6" y2="452" stroke="#f2a47a" stroke-width="0.8" stroke-dasharray="3.5,2.5"/>
<line x1="569.3" y1="451.8" x2="952" y2="451.8" stroke="#f2a47a" stroke-width="0.8" stroke-dasharray="3.5,2.5"/>
<line x1="569.3" y1="349.5" x2="700.5" y2="350.5" stroke="#f2a47a" stroke-width="0.8" stroke-dasharray="3.5,2.5"/>
<circle cx="657" cy="166.6" r="1.2" fill="#e85050"/>
<circle cx="672.2" cy="232.7" r="1.1" fill="#e85050"/>
<line x1="826.7" y1="112.2" x2="951" y2="340" stroke="#e85a5a" stroke-width="0.8" stroke-dasharray="3,2"/>
<line x1="881" y1="193" x2="949.6" y2="340.3" stroke="#e85a5a" stroke-width="0.8" stroke-dasharray="3,2"/>
<line x1="703.8" y1="275.7" x2="767.6" y2="260.4" stroke="#d06060" stroke-width="1"/>
<polyline points="715.5,272.9 720.6,280.4 719.8,263.1 727.0,278.9 726.2,261.6 733.3,277.4 732.5,260.1 739.6,275.8 738.8,258.6 746.0,274.3 745.2,257.0 752.3,272.8 751.5,255.5 758.6,271.3 759.8,262.3" fill="none" stroke="#dc8c8c" stroke-width="1.1"/>
<path d="M571.4,350.4 L705.8,279.5 A4.25,4.25 0 0 0 701.8,271.9 L567.4,342.8 A4.25,4.25 0 0 0 571.4,350.4 Z" fill="rgba(185,220,216,0.6)" stroke="#4f8f8a" stroke-width="0.7"/>
<path d="M572,342.6 L666,343 Q676,342.5 680,338 L690,338 L684,352 L572,351 Q566,347 572,342.6 Z" fill="rgba(185,220,216,0.6)" stroke="#4f8f8a" stroke-width="0.7"/>
<polygon points="672,295 684,291 690,334 686,344 683,340" fill="rgba(185,220,216,0.6)" stroke="#4f8f8a" stroke-width="0.7"/>
<path d="M668.5,288 Q670,284.5 675,285.5 L696,299.5 Q699.5,303 697.5,307 Q695,310.5 690,310 L686,309.5 Q683,309 681,306 L670.5,294 Q667.5,291 668.5,288 Z" fill="rgba(175,215,165,0.5)" stroke="#5f9a6a" stroke-width="0.7"/>
<path d="M690.5,351.7 L701.3,342.1 A6.0,6.0 0 0 0 693.3,333.1 L682.5,342.7 A6.0,6.0 0 0 0 690.5,351.7 Z" fill="rgba(160,175,220,0.5)" stroke="#6070a8" stroke-width="0.7"/>
<polygon points="703.3,337.6 700.3,342.8 694.3,342.8 691.3,337.6 694.3,332.40000000000003 700.3,332.40000000000003" fill="rgba(190,175,160,0.45)" stroke="#8a8070" stroke-width="0.6"/>
<circle cx="569.4" cy="346.6" r="2.7" fill="rgba(255,255,255,0.3)" stroke="#303a7a" stroke-width="1.3"/>
<circle cx="673.6" cy="289.7" r="2.7" fill="rgba(255,255,255,0.3)" stroke="#2c3c4c" stroke-width="1.3"/>
<circle cx="703.8" cy="275.7" r="2.7" fill="rgba(255,255,255,0.3)" stroke="#2c3c5c" stroke-width="1.3"/>
<circle cx="693.1" cy="304.0" r="2.7" fill="rgba(255,255,255,0.3)" stroke="#2c3c2c" stroke-width="1.3"/>
<circle cx="686.5" cy="347.2" r="2.7" fill="rgba(255,255,255,0.3)" stroke="#303a8a" stroke-width="1.3"/>
<circle cx="697.3" cy="337.6" r="2.7" fill="rgba(255,255,255,0.3)" stroke="#3c3c4c" stroke-width="1.3"/>
<circle cx="767.6" cy="260.4" r="2.7" fill="rgba(255,255,255,0.3)" stroke="#2c2c4c" stroke-width="1.3"/>
<circle cx="951.6" cy="344.5" r="2.7" fill="rgba(255,255,255,0.3)" stroke="#2a2a5a" stroke-width="1.3"/>
<circle cx="569.3" cy="346.4" r="0.8" fill="#e03030"/>
<path d="M569.3,346.4 C568.3,335 568.6,322 570,311 C570.8,306 571.8,302 573.3,298" fill="none" stroke="#ff1a1a" stroke-width="1"/>
<circle cx="852.7" cy="167.2" r="1.1" fill="#e04040"/>
<circle cx="868.3" cy="199.9" r="1.1" fill="#e04040"/>
<circle cx="700.8" cy="350.5" r="1.1" fill="#e04040"/>
<circle cx="701.6" cy="169.6" r="2.6" fill="none" stroke="#b05050" stroke-width="0.8"/>
<line x1="697" y1="169.6" x2="706" y2="169.6" stroke="#c07070" stroke-width="0.6"/>
<line x1="701.6" y1="165" x2="701.6" y2="174" stroke="#c07070" stroke-width="0.6"/>
<text x="755" y="170" text-anchor="middle" style="font-size:8px;fill:#7c4428;">646.7 (502.0)</text>
<text x="703.4" y="179.3" text-anchor="start" style="font-size:8.5px;fill:#883040;">CG</text>
<text x="875.5" y="191" text-anchor="middle" style="font-size:8px;fill:#9a3040;">64.5°</text>
<text x="679" y="261.3" text-anchor="middle" style="font-size:7.5px;fill:#7c4428;">76.7°</text>
<text x="707.6" y="266.6" text-anchor="middle" style="font-size:7.5px;fill:#7c4428;">610.1</text>
<text x="735" y="272" text-anchor="middle" style="font-size:8px;fill:#7c4428;opacity:0.85">216.0 (0.0 mm)</text>
<text x="634.8" y="353.8" text-anchor="middle" style="font-size:8px;fill:#7c4428;">435.2 (435.4)</text>
<text x="708" y="408.5" text-anchor="middle" style="font-size:8px;fill:#7c4428;">334.9(-13.1)</text>
<text x="760" y="454.6" text-anchor="middle" style="font-size:8px;fill:#7c4428;">1268.0</text>
<text x="668.5" y="341.4" text-anchor="middle" style="font-size:9px;fill:#a040b0;">CC</text>
<text x="722.3" y="331.4" text-anchor="middle" style="font-size:9px;fill:#5040c8;">IC</text>
</g>
</svg>
<!-- info panel -->
<div class="a" style="left:912.5px;top:52.5px;width:212.5px;height:248px;background:rgba(247,247,222,0.62);"></div>
<div class="info" style="top:56.4px;">Short link 4-Bar (VPP) (160/160 mm)</div>
<div class="info" style="top:69.7px;">Vertical rear travel</div><div class="val" style="top:69.7px;">0.0 mm</div>
<div class="info" style="top:80.3px;">Rear travel on axle path</div><div class="val" style="top:80.3px;">0.0 mm</div>
<div class="info" style="top:91.0px;">Front wheel travel</div><div class="val" style="top:91.0px;">0.0 mm</div>
<div class="info" style="top:101.6px;">Vertical Front wheel travel</div><div class="val" style="top:101.6px;">0.0 mm</div>
<div class="info" style="top:115.2px;">Shock Compression</div><div class="val" style="top:115.2px;">0.0 mm</div>
<div class="info" style="top:125.9px;">Max shock compression</div><div class="val" style="top:125.9px;">62.1 mm</div>
<div class="info" style="top:139.5px;">Gear ratio</div><div class="val" style="top:139.5px;">1.42</div>
<div class="info" style="top:150.6px;">Rollout (gear metre)</div><div class="val" style="top:150.6px;">3098 mm</div>
<div class="info" style="top:164.2px;">BB-RW distance</div><div class="val" style="top:164.2px;">435.4 mm</div>
<div class="info" style="top:174.8px;">Chainstay Length</div><div class="val" style="top:174.8px;">435.2 mm</div>
<div class="info" style="top:185.5px;">Top tube length</div><div class="val" style="top:185.5px;">646.7 mm</div>
<div class="info" style="top:196.1px;">Wheelbase</div><div class="val" style="top:196.1px;">1268.0 mm</div>
<div class="info" style="top:206.7px;">BB height</div><div class="val" style="top:206.7px;">334.9 mm</div>
<div class="info" style="top:217.8px;">Current head angle</div><div class="val" style="top:217.8px;">64.5°</div>
<div class="info" style="top:228.4px;">Reach</div><div class="val" style="top:228.4px;">502.0 mm</div>
<div class="info" style="top:239.1px;">Stack</div><div class="val" style="top:239.1px;">610.1 mm</div>
<div class="info" style="top:252.7px;">Instant center</div><div class="val" style="top:252.7px;">53.7 mm ; 95.6 mm</div>
<div class="info" style="top:263.3px;">Center of curvature</div><div class="val" style="top:263.3px;">-127.8 mm ; 65.0 mm</div>
<div class="info" style="top:282.5px;">Force to wheel</div><div class="val" style="top:282.5px;">0.0 N</div>
<!-- scrollbars -->
<div class="a" style="left:1125px;top:52px;width:10px;height:522px;background:#f0f0f0;"></div>
<div class="a" style="left:1126px;top:307px;width:8px;height:12px;background:#cdcdcd;"></div>
<div class="a" style="left:377px;top:574.5px;width:758px;height:8.5px;background:#f0f0f0;"></div>
<div class="a" style="left:750px;top:575px;width:12px;height:7px;background:#cdcdcd;"></div>
<svg class="a" style="left:0;top:0;" width="1140" height="588"><defs><linearGradient id="tri" x1="0" y1="0" x2="0" y2="1"><stop offset="0" stop-color="#fff"/><stop offset="1" stop-color="#666"/></linearGradient></defs>
<polyline points="186.0,53.9 188.5,51.1 191.0,53.9" fill="none" stroke="#505050" stroke-width="1.45"/>
<polyline points="186.0,111.1 188.5,113.9 191.0,111.1" fill="none" stroke="#505050" stroke-width="1.45"/>
<polyline points="365.0,61.4 367.5,58.6 370.0,61.4" fill="none" stroke="#505050" stroke-width="1.45"/>
<polyline points="365.0,126.6 367.5,129.4 370.0,126.6" fill="none" stroke="#505050" stroke-width="1.45"/>
<polyline points="353.2,190.4 355.7,187.6 358.2,190.4" fill="none" stroke="#505050" stroke-width="1.45"/>
<polyline points="364.7,190.4 367.2,187.6 369.7,190.4" fill="none" stroke="#505050" stroke-width="1.45"/>
<polyline points="353.2,547.1 355.7,549.9 358.2,547.1" fill="none" stroke="#505050" stroke-width="1.45"/>
<polyline points="364.7,547.1 367.2,549.9 369.7,547.1" fill="none" stroke="#505050" stroke-width="1.45"/>
<polyline points="187.75,125.5 190.5,128.5 193.25,125.5" fill="none" stroke="#444" stroke-width="1.45"/>
<polyline points="1127.0,60.1 1129.5,57.300000000000004 1132.0,60.1" fill="none" stroke="#505050" stroke-width="1.45"/>
<polyline points="1127.0,567.0 1129.5,569.8 1132.0,567.0" fill="none" stroke="#505050" stroke-width="1.45"/>
<polyline points="382.9,576.5 380.1,579 382.9,581.5" fill="none" stroke="#505050" stroke-width="1.45"/>
<polyline points="1128.1,576.5 1130.9,579 1128.1,581.5" fill="none" stroke="#505050" stroke-width="1.45"/>
<polyline points="487.55,29.5 490.3,32.5 493.05,29.5" fill="none" stroke="#444" stroke-width="1.45"/>
<polyline points="546.55,43.8 549.3,46.8 552.05,43.8" fill="none" stroke="#555" stroke-width="1.45"/>
<polyline points="584.85,43.8 587.6,46.8 590.35,43.8" fill="none" stroke="#555" stroke-width="1.45"/>
<line x1="378.5" y1="39.5" x2="378.5" y2="50" stroke="#9ab0c8" stroke-width="0.5"/>
<line x1="378" y1="40.0" x2="387.5" y2="40.0" stroke="#9ab0c8" stroke-width="0.5"/>
<line x1="380.7" y1="39.5" x2="380.7" y2="50" stroke="#9ab0c8" stroke-width="0.5"/>
<line x1="378" y1="42.3" x2="387.5" y2="42.3" stroke="#9ab0c8" stroke-width="0.5"/>
<line x1="382.9" y1="39.5" x2="382.9" y2="50" stroke="#9ab0c8" stroke-width="0.5"/>
<line x1="378" y1="44.6" x2="387.5" y2="44.6" stroke="#9ab0c8" stroke-width="0.5"/>
<line x1="385.1" y1="39.5" x2="385.1" y2="50" stroke="#9ab0c8" stroke-width="0.5"/>
<line x1="378" y1="46.9" x2="387.5" y2="46.9" stroke="#9ab0c8" stroke-width="0.5"/>
<line x1="387.3" y1="39.5" x2="387.3" y2="50" stroke="#9ab0c8" stroke-width="0.5"/>
<line x1="378" y1="49.2" x2="387.5" y2="49.2" stroke="#9ab0c8" stroke-width="0.5"/>
<circle cx="393.3" cy="44.0" r="2.9" fill="#fff" stroke="#333" stroke-width="1.0"/><line x1="395.4" y1="46.099999999999994" x2="398.2" y2="48.599999999999994" stroke="#333" stroke-width="1.6"/>
<circle cx="404.7" cy="44.0" r="2.9" fill="#fff" stroke="#333" stroke-width="1.0"/><line x1="406.79999999999995" y1="46.099999999999994" x2="409.59999999999997" y2="48.599999999999994" stroke="#333" stroke-width="1.6"/>
<circle cx="416.1" cy="44.0" r="2.9" fill="#fff" stroke="#333" stroke-width="1.0"/><line x1="418.2" y1="46.099999999999994" x2="421.0" y2="48.599999999999994" stroke="#333" stroke-width="1.6"/>
<circle cx="427.5" cy="44.0" r="2.9" fill="#fff" stroke="#222" stroke-width="1.5"/><line x1="429.59999999999997" y1="46.099999999999994" x2="432.4" y2="48.599999999999994" stroke="#222" stroke-width="1.6"/>
<polygon points="436,47 442,41 444.5,42 440,48" fill="#2060e0"/>
<rect x="436" y="47.5" width="8" height="1.6" fill="#e02020"/>
<rect x="436" y="40.5" width="4" height="6" fill="#bbb" opacity="0.7"/>
<circle cx="451.2" cy="44.6" r="3.4" fill="#ddd" stroke="#333" stroke-width="1"/>
<polygon points="462.6,40 466.8,44.3 462.6,48.6 458.4,44.3" fill="#dfe8df" stroke="#333" stroke-width="0.9"/>
<line x1="462.6" y1="40.5" x2="462.6" y2="48" stroke="#333" stroke-width="0.7"/><line x1="459" y1="44.3" x2="466.3" y2="44.3" stroke="#333" stroke-width="0.7"/>
<text x="470" y="48" style="font-size:8px;font-weight:bold;fill:#444;">m</text>
<rect x="481.4" y="42" width="8" height="6" fill="#ccc" stroke="#888" stroke-width="0.6"/>
<line x1="485.4" y1="42" x2="485.4" y2="48" stroke="#888" stroke-width="0.6"/><line x1="481.4" y1="45" x2="489.4" y2="45" stroke="#888" stroke-width="0.6"/>
<rect x="493.8" y="41.5" width="6.3" height="6.8" fill="#fff" stroke="#555" stroke-width="1"/>
<text x="494.2" y="48" style="font-size:7px;font-weight:bold;fill:#c02020;">P</text>
<polyline points="505,47 507,42.5 512.5,41.5" fill="none" stroke="#2a9a2a" stroke-width="1.4"/>
<polyline points="507,42.5 512,42.5 508,46" fill="none" stroke="#2050e0" stroke-width="1.4"/>
<line x1="505" y1="47.8" x2="512.5" y2="47.3" stroke="#e02020" stroke-width="1.4"/>
<polygon points="528.3,40 528.3,49.2 524.3,44.6" fill="#111"/>
<polygon points="556.9,40.5 556.9,48.5 560.4,44.5" fill="#111"/>
<polygon points="566.1,40.5 566.1,48.5 562.6,44.5" fill="#111"/>
<polygon points="595,40.5 595,48.5 598.5,44.5" fill="#111"/>
<rect x="529.6" y="38.5" width="26" height="12" fill="#f0f0f0" stroke="#d8d8d8" stroke-width="0.6"/>
<rect x="567.4" y="38.5" width="26.3" height="12" fill="#f0f0f0" stroke="#d8d8d8" stroke-width="0.6"/>
<polyline points="546.55,43.8 549.3,46.8 552.05,43.8" fill="none" stroke="#555" stroke-width="1.45"/>
<polyline points="584.85,43.8 587.6,46.8 590.35,43.8" fill="none" stroke="#555" stroke-width="1.45"/>
<text x="531.5" y="48.8" style="font-size:8.5px;fill:#2a3a5a;">24</text>
<text x="569.8" y="48.8" style="font-size:8.5px;fill:#2a3a5a;">34</text>
<circle cx="605.8" cy="44.3" r="3.8" fill="#b8b0a8" stroke="#9a9288" stroke-width="0.8" stroke-dasharray="1,0.6"/>
<circle cx="605.8" cy="44.3" r="1.2" fill="#eee"/>
<path d="M616.5,46 A3.2,3.2 0 1 1 620,47.5" fill="none" stroke="#333" stroke-width="1.3"/>
<line x1="615.5" y1="48.5" x2="617" y2="46.5" stroke="#aaa" stroke-width="0.8"/>
<circle cx="633.5" cy="42.5" r="2.3" fill="#e02020"/>
<line x1="631" y1="45" x2="629.7" y2="48.5" stroke="#a03030" stroke-width="1.2"/>
<rect x="510" y="26" width="6.5" height="6.5" fill="#6a8ae0" stroke="#3a5ab0" stroke-width="0.5"/>
<line x1="512" y1="32" x2="517" y2="26.5" stroke="#e0a020" stroke-width="1.3"/>
<path d="M551.5,29 L554,26.5 L554,28.5 Q560,28 560.5,32 Q560,34.5 557,35" fill="none" stroke="#cfcfcf" stroke-width="1.6"/>
<path d="M585,29 L582.5,26.5 L582.5,28.5 Q576.5,28 576,32 Q576.5,34.5 579.5,35" fill="none" stroke="#cfcfcf" stroke-width="1.6"/>
<rect x="353" y="159.5" width="8" height="6.5" fill="#fff" stroke="#999" stroke-width="0.5"/>
<polygon points="354.3,164.5 357,161 359.7,164.5" fill="#111"/>
<line x1="354" y1="160.2" x2="360" y2="160.2" stroke="#111" stroke-width="0.8"/>
<rect x="353" y="166.5" width="8" height="6.5" fill="#fff" stroke="#999" stroke-width="0.5"/>
<circle cx="357" cy="169.7" r="1.2" fill="#111"/>
<rect x="353" y="173.5" width="8" height="6.5" fill="#fff" stroke="#999" stroke-width="0.5"/>
<polygon points="354.3,175 357,178.5 359.7,175" fill="#111"/>
<line x1="354" y1="179.3" x2="360" y2="179.3" stroke="#111" stroke-width="0.8"/>
<rect x="363" y="159.5" width="8" height="6.5" fill="#fff" stroke="#999" stroke-width="0.5"/>
<polygon points="364.3,164.5 367,161 369.7,164.5" fill="#111"/>
<line x1="364" y1="160.2" x2="370" y2="160.2" stroke="#111" stroke-width="0.8"/>
<rect x="363" y="166.5" width="8" height="6.5" fill="#fff" stroke="#999" stroke-width="0.5"/>
<circle cx="367" cy="169.7" r="1.2" fill="#111"/>
<rect x="363" y="173.5" width="8" height="6.5" fill="#fff" stroke="#999" stroke-width="0.5"/>
<polygon points="364.3,175 367,178.5 369.7,175" fill="#111"/>
<line x1="364" y1="179.3" x2="370" y2="179.3" stroke="#111" stroke-width="0.8"/>
<polygon points="1110,61.8 1116.5,54.6 1123,61.8" fill="url(#tri)" stroke="#333" stroke-width="0.9"/>
<rect x="1098" y="53" width="4" height="1.6" fill="#ccc"/><rect x="1098" y="57" width="4" height="1.6" fill="#ccc"/><rect x="1098" y="60" width="4" height="1.6" fill="#ccc"/><rect x="1098" y="63" width="4" height="1.6" fill="#ccc"/>
<rect x="1103" y="53" width="5" height="5" fill="#a8d0f0"/><rect x="1103.5" y="60" width="4" height="1.6" fill="#ccc"/><rect x="1103.5" y="63" width="4" height="1.6" fill="#ccc"/>
<text x="931.5" y="275.2" text-anchor="middle" style="font-size:7.5px;fill:#d88a8a;">554.0</text>
<circle cx="357" cy="142.5" r="2.2" fill="none" stroke="#333" stroke-width="0.8"/><circle cx="362.5" cy="142.5" r="2.2" fill="none" stroke="#333" stroke-width="0.8"/>
<polyline points="357,142.5 359.5,138.5 362.5,142.5" fill="none" stroke="#333" stroke-width="0.6"/>
</svg>
</body></html>
